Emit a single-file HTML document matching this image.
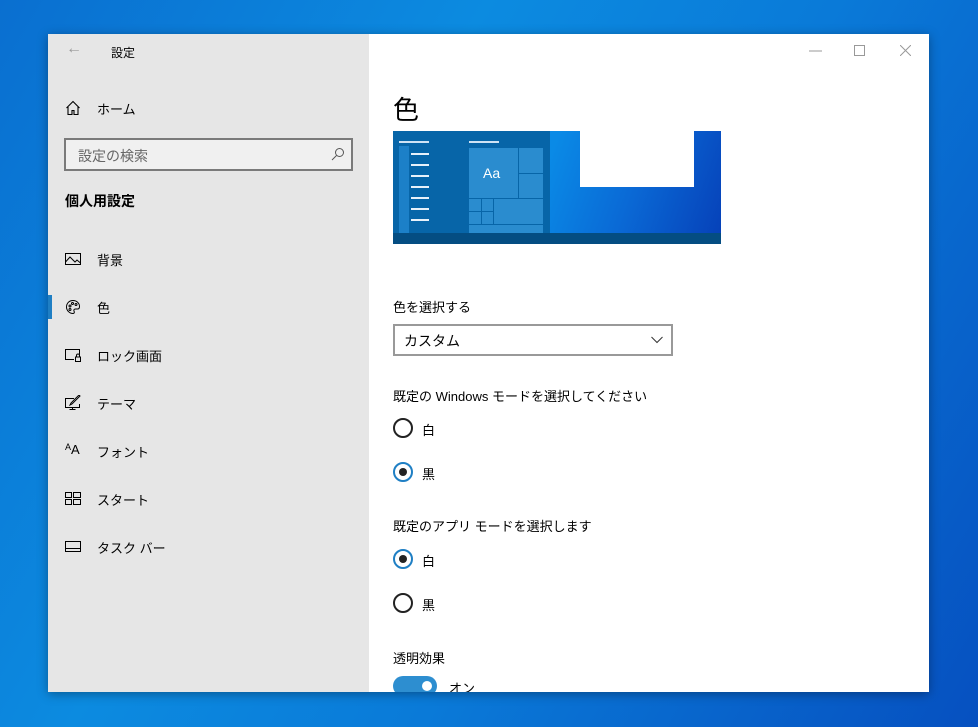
<!DOCTYPE html><html><head><meta charset="utf-8"><style>
*{margin:0;padding:0;box-sizing:border-box}
body{width:978px;height:727px;overflow:hidden;position:relative;font-family:"Liberation Sans","Noto Sans CJK JP",sans-serif;background:linear-gradient(120deg,#0a6fd0 0%,#0c8be0 35%,#0a7ad8 60%,#0650c0 100%);}
.win{position:absolute;left:48px;top:34px;width:881px;height:658px;background:#fff;box-shadow:0 2px 10px rgba(0,0,0,.35);overflow:hidden}
.side{position:absolute;left:0;top:0;width:321px;height:658px;background:#e6e6e6}
.t{position:absolute;font-size:13px;color:#000;white-space:nowrap}
svg{position:absolute}
.radio{position:absolute;width:20px;height:20px;border-radius:50%;border:2px solid #222}
.radio.on{border-color:#1f7fc4}
.radio.on::after{content:"";position:absolute;left:4px;top:4px;width:8px;height:8px;border-radius:50%;background:#222}
</style></head><body>
<div class="win">
<div class="side">
<div class="t" style="left:18px;top:6px;color:#999;font-size:16px">←</div>
<div class="t" style="left:63px;top:10px;font-size:12px">設定</div>
<svg style="left:17px;top:66px" width="16" height="16" viewBox="0 0 16 16" fill="none" stroke="#000" stroke-width="1.1"><path d="M1.5 8 8 1.5 14.5 8M3 7v7.5h4v-4h2v4h4V7"/></svg>
<div class="t" style="left:49px;top:65px">ホーム</div>
<div style="position:absolute;left:16px;top:104px;width:289px;height:33px;border:2px solid #7a7a7a;background:#f0f0f0"></div>
<div class="t" style="left:30px;top:112px;color:#666;font-size:14px">設定の検索</div>
<svg style="left:283px;top:113px" width="14" height="14" viewBox="0 0 14 14" fill="none" stroke="#555" stroke-width="1"><circle cx="8.5" cy="5.5" r="4"/><path d="M5.5 8.5 1 13"/></svg>
<div class="t" style="left:17px;top:157px;font-weight:bold;font-size:14px">個人用設定</div>
<div style="position:absolute;left:0;top:261px;width:4px;height:24px;background:#1f7fc4"></div>
<svg style="left:17px;top:218px" width="16" height="14" viewBox="0 0 16 14" fill="none" stroke="#000" stroke-width="1"><rect x=".5" y="1.5" width="15" height="11"/><path d="M.5 10 5 5l5 5 2-2 3.5 3"/></svg>
<div class="t" style="left:49px;top:216px">背景</div>
<svg style="left:17px;top:265px" width="16" height="16" viewBox="0 0 16 16" fill="none" stroke="#000" stroke-width="1"><path d="M8 1.5C4 1.5 1.5 4.5 1.5 8c0 3.5 3 6.5 6.5 6.5 1.5 0 1.5-1.5 1-2.5s0-2 1.5-2h2c1.5 0 2-1 2-2.5 0-3.5-3-6-6.5-6z"/><circle cx="5" cy="7" r="1"/><circle cx="7.5" cy="4.5" r="1"/><circle cx="11" cy="5.5" r="1"/><circle cx="5" cy="10.5" r="1"/></svg>
<div class="t" style="left:49px;top:264px">色</div>
<svg style="left:17px;top:314px" width="16" height="14" viewBox="0 0 16 14" fill="none" stroke="#000" stroke-width="1"><path d="M9 11.5H.5v-10h14v5"/><rect x="10.5" y="9" width="5" height="4.5"/><path d="M11.5 9V7.5a1.5 1.5 0 0 1 3 0V9"/></svg>
<div class="t" style="left:49px;top:312px">ロック画面</div>
<svg style="left:17px;top:361px" width="16" height="16" viewBox="0 0 16 16" fill="none" stroke="#000" stroke-width="1"><path d="M9 3.5H.5v9h14V9M7.5 12.5v2M4.5 14.5h6"/><path d="M15 1 7 9l-2 1 1-2 8-8z"/></svg>
<div class="t" style="left:49px;top:360px">テーマ</div>
<div class="t" style="left:17px;top:408px;font-size:13px"><span style="font-size:9px;vertical-align:4px">A</span>A</div>
<div class="t" style="left:49px;top:408px">フォント</div>
<svg style="left:17px;top:458px" width="16" height="13" viewBox="0 0 16 13" fill="none" stroke="#000" stroke-width="1"><rect x=".5" y=".5" width="6" height="5"/><rect x="8.5" y=".5" width="7" height="5"/><rect x=".5" y="7.5" width="6" height="5"/><rect x="8.5" y="7.5" width="7" height="5"/></svg>
<div class="t" style="left:49px;top:456px">スタート</div>
<svg style="left:17px;top:507px" width="16" height="11" viewBox="0 0 16 11" fill="none" stroke="#000" stroke-width="1"><rect x=".5" y=".5" width="15" height="10"/><path d="M.5 7.5h15"/></svg>
<div class="t" style="left:49px;top:504px">タスク バー</div>
</div>
<svg style="left:761px;top:16px" width="14" height="2"><path d="M0 1h13" stroke="#999"/></svg>
<svg style="left:806px;top:11px" width="11" height="11"><rect x=".5" y=".5" width="10" height="10" fill="none" stroke="#999"/></svg>
<svg style="left:852px;top:11px" width="11" height="11"><path d="M0 0l11 11M11 0 0 11" stroke="#999"/></svg>
<div class="t" style="left:345px;top:56px;font-size:26px">色</div>
<div style="position:absolute;left:345px;top:97px;width:328px;height:113px;background:linear-gradient(110deg,#0a8ae6 45%,#0a6ad6 70%,#0640b8 100%)">
 <div style="position:absolute;left:0;top:0;width:157px;height:102px;background:#0765a8"></div>
 <div style="position:absolute;left:0;top:102px;width:328px;height:11px;background:#044d82"></div>
 <div style="position:absolute;left:187px;top:0;width:114px;height:56px;background:#fff"></div>
 <div style="position:absolute;left:6px;top:10px;width:30px;height:2px;background:#cfe3f5"></div>
 <div style="position:absolute;left:6px;top:15px;width:10px;height:87px;background:#1c80c8"></div>
 <div style="position:absolute;left:76px;top:10px;width:30px;height:2px;background:#cfe3f5"></div>
 <div style="position:absolute;left:76px;top:17px;width:74px;height:85px;background:#2a8ccf"></div>
 <div style="position:absolute;left:125px;top:17px;width:1px;height:50px;background:#0765a8"></div>
 <div style="position:absolute;left:126px;top:42px;width:24px;height:1px;background:#0765a8"></div>
 <div style="position:absolute;left:76px;top:67px;width:74px;height:1px;background:#0765a8"></div>
 <div style="position:absolute;left:76px;top:93px;width:74px;height:1px;background:#0765a8"></div>
 <div style="position:absolute;left:88px;top:67px;width:1px;height:26px;background:#0765a8"></div>
 <div style="position:absolute;left:100px;top:67px;width:1px;height:26px;background:#0765a8"></div>
 <div style="position:absolute;left:76px;top:80px;width:24px;height:1px;background:#0765a8"></div>
 <div style="position:absolute;left:90px;top:34px;color:#fff;font-size:14px">Aa</div>
 <div style="position:absolute;left:18px;top:17px;width:18px;height:80px;background:repeating-linear-gradient(#0765a8 0 5px,#e8f1fa 5px 7px,#0765a8 7px 11px)"></div>
</div>
<div class="t" style="left:345px;top:263px">色を選択する</div>
<div style="position:absolute;left:345px;top:290px;width:280px;height:32px;border:2px solid #999"></div>
<div class="t" style="left:356px;top:297px;font-size:14px">カスタム</div>
<svg style="left:603px;top:302px" width="12" height="8"><path d="M.5 1 6 6.5 11.5 1" fill="none" stroke="#333"/></svg>
<div class="t" style="left:345px;top:352px">既定の Windows モードを選択してください</div>
<div class="radio" style="left:345px;top:384px"></div><div class="t" style="left:374px;top:386px">白</div>
<div class="radio on" style="left:345px;top:428px"></div><div class="t" style="left:374px;top:430px">黒</div>
<div class="t" style="left:345px;top:482px">既定のアプリ モードを選択します</div>
<div class="radio on" style="left:345px;top:515px"></div><div class="t" style="left:374px;top:517px">白</div>
<div class="radio" style="left:345px;top:559px"></div><div class="t" style="left:374px;top:561px">黒</div>
<div class="t" style="left:345px;top:614px">透明効果</div>
<div style="position:absolute;left:345px;top:642px;width:44px;height:20px;border-radius:10px;background:#2d8ed0"><div style="position:absolute;left:29px;top:5px;width:10px;height:10px;border-radius:50%;background:#fff"></div></div>
<div class="t" style="left:401px;top:644px">オン</div>
</div>
</body></html>
